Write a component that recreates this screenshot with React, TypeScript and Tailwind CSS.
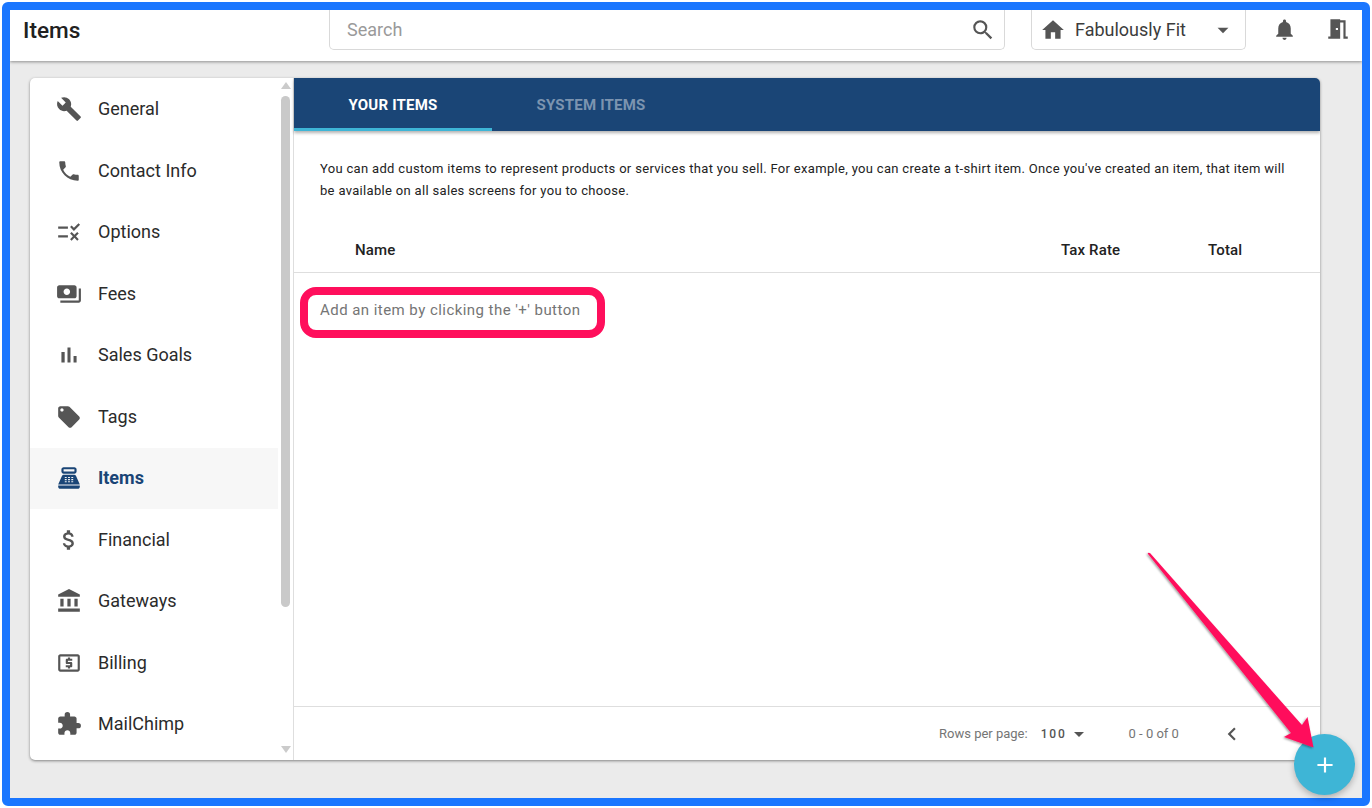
import React from "react";
import {
  MdBuild, MdPhone, MdRule, MdPayments, MdLocalOffer, MdPointOfSale, MdAttachMoney,
  MdAccountBalance, MdLocalAtm, MdExtension, MdHome, MdSearch, MdNotifications, MdMeetingRoom,
  MdChevronLeft, MdArrowDropDown, MdAdd,
} from "react-icons/md";

function BarsIcon({ className }: { className?: string }) {
  return (
    <svg className={className} width="1em" height="1em" viewBox="0 0 24 24" fill="currentColor">
      <path d="M5 9.2h3V19H5zM10.6 5h2.8v14h-2.8zm5.6 8H19v6h-2.8z" />
    </svg>
  );
}

const items = [
  { label: "General", Icon: MdBuild },
  { label: "Contact Info", Icon: MdPhone },
  { label: "Options", Icon: MdRule },
  { label: "Fees", Icon: MdPayments },
  { label: "Sales Goals", Icon: BarsIcon },
  { label: "Tags", Icon: MdLocalOffer },
  { label: "Items", Icon: MdPointOfSale, active: true },
  { label: "Financial", Icon: MdAttachMoney },
  { label: "Gateways", Icon: MdAccountBalance },
  { label: "Billing", Icon: MdLocalAtm },
  { label: "MailChimp", Icon: MdExtension },
];

export default function App() {
  return (
    <div className="relative w-[1372px] h-[808px] overflow-hidden bg-white p-[2px] font-['Roboto',sans-serif]">
      <div className="w-[1368px] h-[804px] border-8 border-[#1a76ff] rounded-[6px] bg-[#ebebeb] flex flex-col overflow-hidden">
        <header className="h-[51px] shrink-0 bg-white shadow-[0_1px_3px_rgba(0,0,0,0.4)] flex items-start relative">
          <h1 className="w-[319px] pl-[13px] pt-[6px] text-[22.6px] leading-[30px] font-medium text-[#212121]">Items</h1>
          <div className="w-[676px] h-[40px] border border-t-0 border-[#d9d9d9] rounded-b-[5px] flex items-center pl-[17px] pr-[8px] justify-between">
            <span className="text-[18px] text-[#9a9a9a]">Search</span>
            <MdSearch className="text-[26px] text-[#555]" />
          </div>
          <div className="ml-[26px] w-[215px] h-[40px] border border-t-0 border-[#d9d9d9] rounded-b-[5px] flex items-center pl-[8px] pr-[9px]">
            <MdHome className="text-[26px] text-[#555]" />
            <span className="ml-[9px] text-[18px] text-[#3c3c3c] flex-1">Fabulously Fit</span>
            <MdArrowDropDown className="text-[26px] text-[#555]" />
          </div>
          <div className="ml-[26px] mt-[6px] flex items-center gap-[28px]">
            <MdNotifications className="text-[25px] text-[#555]" />
            <MdMeetingRoom className="text-[26px] text-[#555]" />
          </div>
        </header>

        <main className="flex-1 pl-[20px] pt-[17px]">
          <div className="w-[1290px] h-[682px] bg-white rounded-[5px] shadow-[0_1px_3px_rgba(0,0,0,0.45)] flex overflow-hidden">
            <aside className="w-[264px] shrink-0 border-r border-[#dedede] flex">
              <nav className="w-[248px] shrink-0 flex flex-col pt-[0.5px]">
                {items.map(({ label, Icon, active }) => (
                  <div key={label} className={`h-[61.5px] shrink-0 flex items-center ${active ? "bg-[#f7f7f7]" : ""}`}>
                    <span className="w-[68px] flex justify-center pl-[10px]">
                      <Icon className={`text-[26px] ${active ? "text-[#1a4576]" : "text-[#555]"}`} />
                    </span>
                    <span className={`text-[18px] pb-[1px] ${active ? "font-bold text-[#1a4576]" : "text-[#2b2b2b]"}`}>{label}</span>
                  </div>
                ))}
              </nav>
              <div className="ml-[3px] w-[9px] flex flex-col items-center">
                <div className="mt-[4px] w-0 h-0 border-x-[5px] border-x-transparent border-b-[7px] border-b-[#cbcbcb]" />
                <div className="mt-[7px] w-[9px] h-[511px] rounded-[5px] bg-[#c9c9c9]" />
                <div className="mt-[139px] w-0 h-0 border-x-[5px] border-x-transparent border-t-[7px] border-t-[#cbcbcb]" />
              </div>
            </aside>

            <section className="flex-1 flex flex-col min-w-0">
              <div className="h-[53px] shrink-0 bg-[#1a4576] flex shadow-[0_2px_3px_rgba(0,0,0,0.3)]">
                <div className="w-[198px] flex items-center justify-center text-[15px] tracking-[0.2px] font-bold text-white border-b-[3px] border-[#3eb5d6] pt-[4px]">YOUR ITEMS</div>
                <div className="w-[198px] flex items-center justify-center text-[15px] tracking-[0.2px] font-bold text-[#7c94b0] pt-[4px] pb-[3px]">SYSTEM ITEMS</div>
              </div>
              <p className="px-[26px] pt-[27px] text-[13px] leading-[22px] tracking-[0.32px] text-[#222]">
                You can add custom items to represent products or services that you sell. For example, you can create a t-shirt item. Once you've created an item, that item will be available on all sales screens for you to choose.
              </p>
              <div className="mt-[26px] h-[45px] shrink-0 border-b border-[#dedede] flex items-center text-[15px] tracking-[0.15px] font-medium text-[#222] pt-[1px]">
                <span className="ml-[61px] w-[706px]">Name</span>
                <span className="w-[147px]">Tax Rate</span>
                <span>Total</span>
              </div>
              <div className="ml-[6px] mt-[14px] w-[305px] h-[51px] border-8 border-[#ff0f5c] rounded-[16px] flex items-center pl-[12px] text-[15px] tracking-[0.45px] text-[#757575] pb-[5px]">
                Add an item by clicking the '+' button
              </div>
              <div className="flex-1" />
              <div className="h-[54px] shrink-0 border-t border-[#dedede] flex items-center text-[13px] text-[#757575]">
                <span className="ml-[645px]">Rows per page:</span>
                <span className="ml-[13px] text-[12px] font-medium tracking-[1.8px] text-[#555]">100</span>
                <MdArrowDropDown className="text-[24px] text-[#555]" />
                <span className="ml-[38px]">0 - 0 of 0</span>
                <MdChevronLeft className="ml-[40px] text-[26px] text-[#555]" />
              </div>
            </section>
          </div>
        </main>
      </div>

      <div className="absolute left-[1294px] top-[734px] w-[61px] h-[61px] rounded-full bg-[#3eb5d6] shadow-[0_3px_6px_rgba(0,0,0,0.25)] flex items-center justify-center">
        <MdAdd className="text-[26px] text-white" />
      </div>
      <svg className="absolute left-0 top-0 pointer-events-none" width="1372" height="808" viewBox="0 0 1372 808">
        <defs>
          <filter id="arrowShadow" x="-20%" y="-20%" width="140%" height="140%">
            <feDropShadow dx="-1" dy="1" stdDeviation="1" floodColor="#000" floodOpacity="0.4" />
          </filter>
        </defs>
        <path
          d="M1147.6 553.6 Q1148.5 552 1150.2 553.2 L1302 725 L1307.5 717 L1313.5 747.5 L1284 737 L1291 733 Z"
          fill="#ff0f5c"
          filter="url(#arrowShadow)"
        />
      </svg>
    </div>
  );
}
